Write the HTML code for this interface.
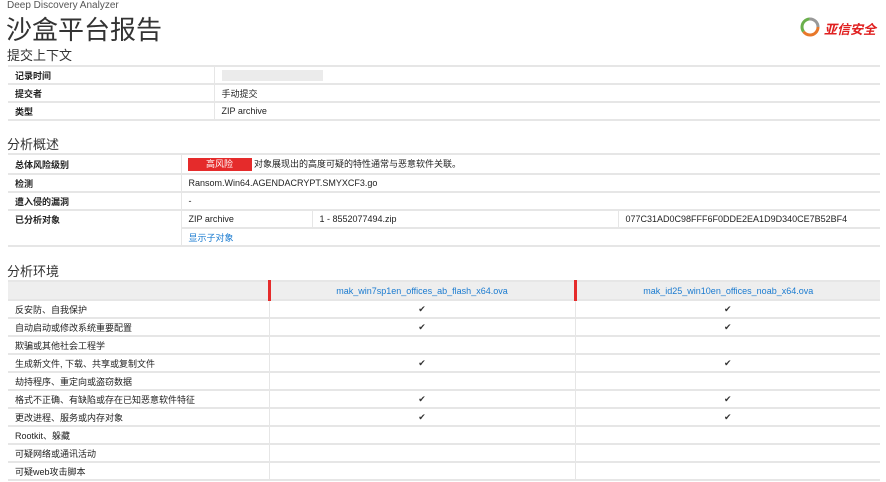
<!DOCTYPE html>
<html><head><meta charset="utf-8"><style>
body{margin:0;width:886px;height:482px;overflow:hidden;background:#fff;font-family:"Liberation Sans","Noto Sans CJK SC",sans-serif;color:#222;font-size:9px;position:relative}
.a{position:absolute}
table{position:absolute;border-collapse:collapse;left:8px;width:872px;table-layout:fixed}
td{border-top:2px solid #e6e6e6;padding:0 0 0 7px;height:16px;font-size:9px;white-space:nowrap;overflow:hidden}
td.l{font-weight:bold}
td+td{border-left:1px solid #e6e6e6}
table{border-bottom:2px solid #e6e6e6}
h2{position:absolute;margin:0;font-weight:normal;font-size:13px;color:#333;left:7px}
.chk{text-align:center;padding:0;color:#333}
.env td{height:16px}
</style></head><body>
<div class="a" style="left:7px;top:0;font-size:10px;color:#555">Deep Discovery Analyzer</div>
<div class="a" style="left:6px;top:10px;font-size:26px;color:#333">沙盒平台报告</div>
<div class="a" style="left:800px;top:17px;width:20px;height:20px">
<svg width="20" height="20" viewBox="0 0 20 20"><circle cx="10" cy="10" r="8" fill="none" stroke="#e8782a" stroke-width="3" stroke-dasharray="20 40"/><circle cx="10" cy="10" r="8" fill="none" stroke="#6ab04c" stroke-width="3" stroke-dasharray="0 20 17 30"/><circle cx="10" cy="10" r="8" fill="none" stroke="#999" stroke-width="3" stroke-dasharray="0 37 14 10"/></svg></div>
<div class="a" style="left:824px;top:19px;font-size:13px;color:#e02020;font-weight:bold;font-style:italic">亚信安全</div>
<h2 style="top:45px">提交上下文</h2>
<table style="top:65px"><colgroup><col style="width:206px"><col></colgroup>
<tr><td class="l">记录时间</td><td><span style="display:inline-block;width:101px;height:11px;background:#ebebeb;vertical-align:middle"></span></td></tr>
<tr><td class="l">提交者</td><td>手动提交</td></tr>
<tr><td class="l">类型</td><td>ZIP archive</td></tr></table>
<h2 style="top:134px">分析概述</h2>
<table style="top:153px"><colgroup><col style="width:173px"><col style="width:131px"><col style="width:306px"><col></colgroup>
<tr><td class="l" style="height:18px">总体风险级别</td><td colspan="3"><span style="display:inline-block;background:#e52b2b;color:#fff;width:64px;text-align:center;height:13px;line-height:13px;margin-left:-1px">高风险</span> 对象展现出的高度可疑的特性通常与恶意软件关联。</td></tr>
<tr><td class="l">检测</td><td colspan="3">Ransom.Win64.AGENDACRYPT.SMYXCF3.go</td></tr>
<tr><td class="l">遭入侵的漏洞</td><td colspan="3">-</td></tr>
<tr><td class="l" rowspan="2" style="vertical-align:top;padding-top:2px">已分析对象</td><td>ZIP archive</td><td>1 - 8552077494.zip</td><td>077C31AD0C98FFF6F0DDE2EA1D9D340CE7B52BF4</td></tr>
<tr><td colspan="3" style="color:#1a7bd0;border-left:1px solid #e6e6e6">显示子对象</td></tr></table>
<h2 style="top:261px">分析环境</h2>
<table class="env" style="top:280px"><colgroup><col style="width:261px"><col style="width:306px"><col></colgroup>
<tr style="background:#eee"><td style="height:17px"></td><td class="chk" style="border-left:3px solid #e52b2b;color:#1a7bd0">mak_win7sp1en_offices_ab_flash_x64.ova</td><td class="chk" style="border-left:3px solid #e52b2b;color:#1a7bd0">mak_id25_win10en_offices_noab_x64.ova</td></tr>
<tr><td>反安防、自我保护</td><td class="chk">✔</td><td class="chk">✔</td></tr>
<tr><td>自动启动或修改系统重要配置</td><td class="chk">✔</td><td class="chk">✔</td></tr>
<tr><td>欺骗或其他社会工程学</td><td></td><td></td></tr>
<tr><td>生成新文件, 下载、共享或复制文件</td><td class="chk">✔</td><td class="chk">✔</td></tr>
<tr><td>劫持程序、重定向或盗窃数据</td><td></td><td></td></tr>
<tr><td>格式不正确、有缺陷或存在已知恶意软件特征</td><td class="chk">✔</td><td class="chk">✔</td></tr>
<tr><td>更改进程、服务或内存对象</td><td class="chk">✔</td><td class="chk">✔</td></tr>
<tr><td>Rootkit、躲藏</td><td></td><td></td></tr>
<tr><td>可疑网络或通讯活动</td><td></td><td></td></tr>
<tr><td>可疑web攻击脚本</td><td></td><td></td></tr></table>
</body></html>
